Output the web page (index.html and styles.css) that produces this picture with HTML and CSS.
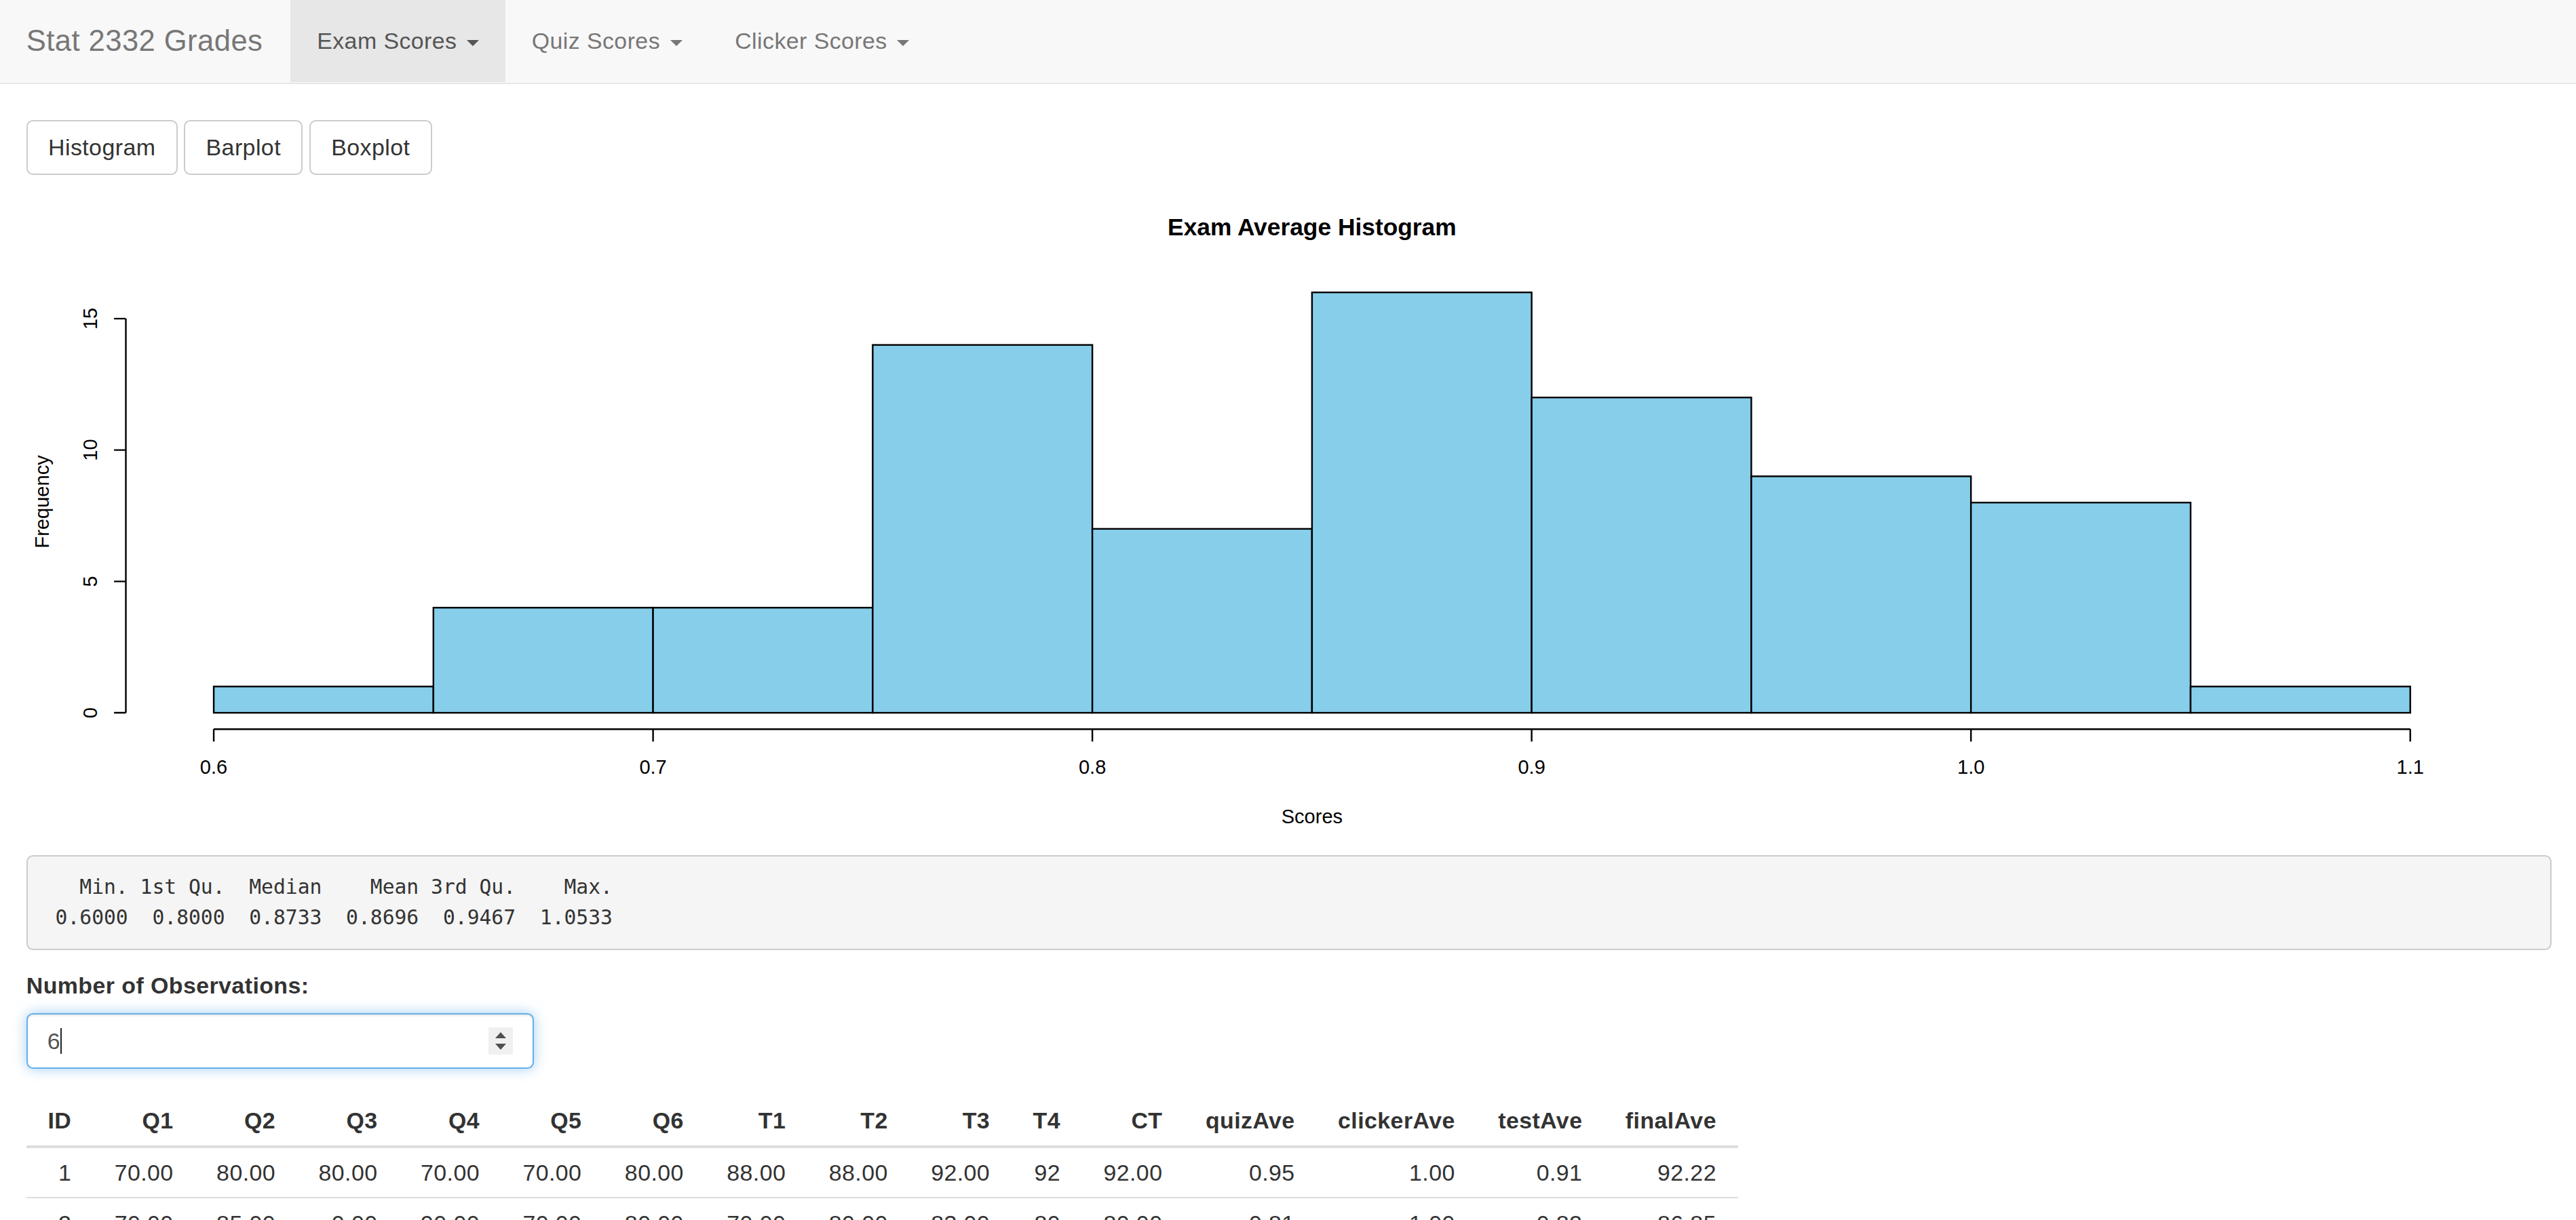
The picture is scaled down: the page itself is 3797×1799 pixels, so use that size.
FILE: index.html
```html
<!DOCTYPE html>
<html lang="en">
<head>
<meta charset="utf-8">
<title>Stat 2332 Grades</title>
<link rel="stylesheet" href="styles.css">
</head>
<body>
<div class="app">
  <nav class="navbar">
    <span class="brand">Stat 2332 Grades</span>
    <ul class="nav">
      <li class="nav-item active"><a class="nav-link" href="#">Exam Scores <b class="caret"></b></a></li>
      <li class="nav-item"><a class="nav-link" href="#">Quiz Scores <b class="caret"></b></a></li>
      <li class="nav-item"><a class="nav-link" href="#">Clicker Scores <b class="caret"></b></a></li>
    </ul>
  </nav>
  <main class="content">
    <div class="btn-row">
      <button class="btn" type="button">Histogram</button>
      <button class="btn" type="button">Barplot</button>
      <button class="btn" type="button">Boxplot</button>
    </div>
    <svg class="plot" viewBox="16 107 1537 414" preserveAspectRatio="none" role="img" aria-label="Exam Average Histogram">
      <text class="plot-title" x="798.5" y="143.8" text-anchor="middle">Exam Average Histogram</text>
      <g class="bars">
        <rect x="130" y="418.5" width="133.7" height="16"/>
        <rect x="263.7" y="370.5" width="133.7" height="64"/>
        <rect x="397.4" y="370.5" width="133.7" height="64"/>
        <rect x="531.1" y="210.5" width="133.7" height="224"/>
        <rect x="664.8" y="322.5" width="133.7" height="112"/>
        <rect x="798.5" y="178.5" width="133.7" height="256"/>
        <rect x="932.2" y="242.5" width="133.7" height="192"/>
        <rect x="1065.9" y="290.5" width="133.7" height="144"/>
        <rect x="1199.6" y="306.5" width="133.7" height="128"/>
        <rect x="1333.3" y="418.5" width="133.7" height="16"/>
      </g>
      <path class="axis" d="M76.5 434.5 V194.5 M69.3 434.5 H76.5 M69.3 354.5 H76.5 M69.3 274.5 H76.5 M69.3 194.5 H76.5"/>
      <path class="axis" d="M130 444.5 H1467 M130 444.5 V452 M397.4 444.5 V452 M664.8 444.5 V452 M932.2 444.5 V452 M1199.6 444.5 V452 M1467 444.5 V452"/>
      <g class="ylabels" text-anchor="middle">
        <text transform="translate(58.9 434.5) rotate(-90)">0</text>
        <text transform="translate(58.9 354.5) rotate(-90)">5</text>
        <text transform="translate(58.9 274.5) rotate(-90)">10</text>
        <text transform="translate(58.9 194.5) rotate(-90)">15</text>
      </g>
      <g class="xlabels" text-anchor="middle">
        <text x="130" y="471.5">0.6</text>
        <text x="397.4" y="471.5">0.7</text>
        <text x="664.8" y="471.5">0.8</text>
        <text x="932.2" y="471.5">0.9</text>
        <text x="1199.6" y="471.5">1.0</text>
        <text x="1467" y="471.5">1.1</text>
      </g>
      <text transform="translate(29.5 306) rotate(-90)" text-anchor="middle">Frequency</text>
      <text x="798.5" y="501.7" text-anchor="middle">Scores</text>
    </svg>
    <pre class="summary">   Min. 1st Qu.  Median    Mean 3rd Qu.    Max. 
 0.6000  0.8000  0.8733  0.8696  0.9467  1.0533 </pre>
    <div class="form-group">
      <label class="field-label">Number of Observations:</label>
      <div class="num-input">
        <span class="num-value">6</span><span class="text-cursor"></span>
        <span class="spinner"><span class="spin-up"></span><span class="spin-down"></span></span>
      </div>
    </div>
    <table class="grades">
      <thead>
        <tr><th>ID</th><th>Q1</th><th>Q2</th><th>Q3</th><th>Q4</th><th>Q5</th><th>Q6</th><th>T1</th><th>T2</th><th>T3</th><th>T4</th><th>CT</th><th>quizAve</th><th>clickerAve</th><th>testAve</th><th>finalAve</th></tr>
      </thead>
      <tbody>
        <tr><td>1</td><td>70.00</td><td>80.00</td><td>80.00</td><td>70.00</td><td>70.00</td><td>80.00</td><td>88.00</td><td>88.00</td><td>92.00</td><td>92</td><td>92.00</td><td>0.95</td><td>1.00</td><td>0.91</td><td>92.22</td></tr>
        <tr><td>2</td><td>70.00</td><td>85.00</td><td>0.00</td><td>90.00</td><td>70.00</td><td>80.00</td><td>70.00</td><td>80.00</td><td>83.00</td><td>80</td><td>80.00</td><td>0.81</td><td>1.00</td><td>0.82</td><td>86.85</td></tr>
      </tbody>
    </table>
  </main>
</div>
</body>
</html>
```
FILE: styles.css
```css
* { box-sizing: border-box; }
html, body { margin: 0; padding: 0; background: #fff; }

.app {
  zoom: 2.4216;
  font-family: "Liberation Sans", Arial, Helvetica, sans-serif;
  font-size: 14px;
  line-height: 1.42857143;
  letter-spacing: 0.18px;
  color: #333;
}

/* navbar */
.navbar {
  display: flex;
  height: 51px;
  padding: 0 15px;
  margin-bottom: 20px;
  background: #f8f8f8;
  border-bottom: 1px solid #e7e7e7;
}
.brand {
  height: 50px;
  padding: 15px 17px 15px 16px;
  margin-left: -15px;
  font-size: 18px;
  line-height: 20px;
  color: #777;
}
.nav { display: flex; margin: 0; padding: 0; list-style: none; }
.nav-link {
  display: block;
  padding: 15px 16px;
  line-height: 20px;
  color: #777;
  text-decoration: none;
}
.nav-item.active .nav-link { color: #555; background: #e7e7e7; }
.caret {
  display: inline-block;
  width: 0;
  height: 0;
  margin-left: 2px;
  vertical-align: middle;
  border-top: 4px solid;
  border-right: 4px solid transparent;
  border-left: 4px solid transparent;
}

/* content */
.content { padding: 0 15px 0 16px; }
.btn-row { display: flex; gap: 4px; padding-top: 2px; }
.btn {
  font: inherit;
  letter-spacing: inherit;
  line-height: 20px;
  padding: 6px 12.5px;
  color: #333;
  background: #fff;
  border: 1px solid #ccc;
  border-radius: 4px;
}

.plot { display: block; width: 100%; height: 414px; letter-spacing: 0; }
.plot text { font-family: "Liberation Sans", Arial, sans-serif; font-size: 12px; fill: #000; }
.plot .plot-title { font-size: 14.6px; font-weight: 700; }
.bars rect { fill: #87ceeb; stroke: #000; stroke-width: 1; }
.axis { fill: none; stroke: #000; stroke-width: 1; }

.summary {
  margin: 0 0 11.5px;
  padding: 9.5px;
  font-family: "DejaVu Sans Mono", "Liberation Mono", monospace;
  font-size: 12.25px;
  line-height: 18.57px;
  letter-spacing: 0;
  color: #333;
  background: #f5f5f5;
  border: 1px solid #ccc;
  border-radius: 4px;
  white-space: pre;
}

.form-group { margin-bottom: 16.5px; }
.field-label { display: inline-block; margin-bottom: 7px; font-weight: 700; }
.num-input {
  display: flex;
  align-items: center;
  width: 309px;
  height: 34px;
  padding: 6px 12px;
  color: #555;
  background: #fff;
  border: 1px solid #66afe9;
  border-radius: 4px;
  box-shadow: inset 0 1px 1px rgba(0,0,0,.075), 0 0 8px rgba(102,175,233,.6);
}
.num-value { line-height: 20px; }
.text-cursor { width: 1px; height: 16px; background: #222; }
.spinner {
  display: flex;
  flex-direction: column;
  align-items: center;
  justify-content: center;
  gap: 3.6px;
  width: 15px;
  height: 16.5px;
  margin-left: auto;
  background: #f0f0f0;
}
.spin-up {
  border-left: 3.5px solid transparent;
  border-right: 3.5px solid transparent;
  border-bottom: 4px solid #505050;
}
.spin-down {
  border-left: 3.5px solid transparent;
  border-right: 3.5px solid transparent;
  border-top: 4px solid #505050;
}

.grades { border-collapse: collapse; margin-bottom: 20px; }
.grades th, .grades td { padding: 5px 13.1px; line-height: 20px; text-align: right; }
.grades th { font-weight: 700; border-bottom: 2px solid #ddd; vertical-align: bottom; }
.grades td { border-top: 1px solid #ddd; }
```
